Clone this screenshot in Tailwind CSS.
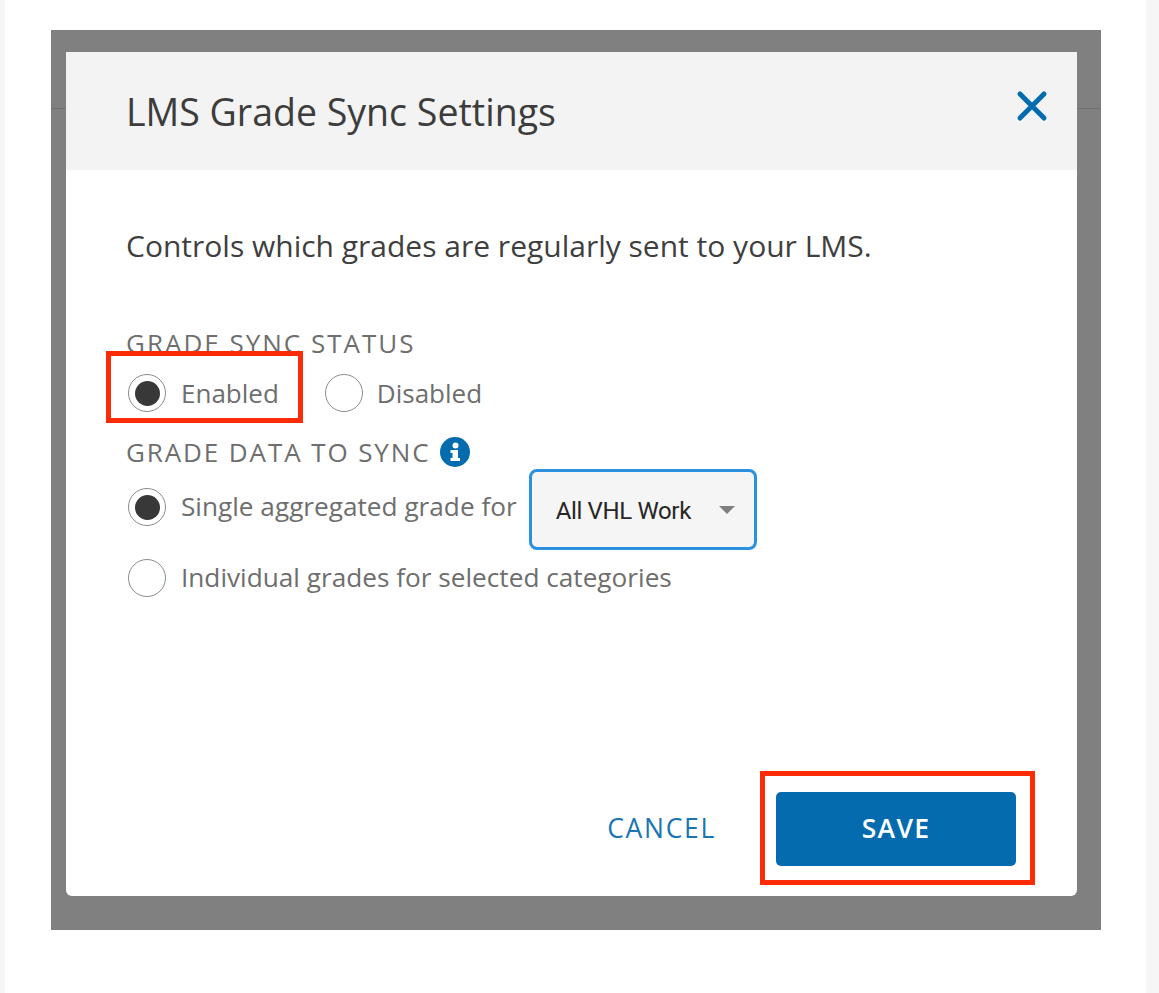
<!DOCTYPE html>
<html lang="en">
<head>
  <meta charset="UTF-8">
  <title>LMS Grade Sync Settings</title>
  <script src="https://cdn.jsdelivr.net/npm/@tailwindcss/browser@4"></script>
</head>
<body class="bg-white font-['Open_Sans',sans-serif] overflow-hidden">
  <div class="flex h-[993px] w-[1159px]">
    <div class="w-[5px] bg-[#f6f6f6]"></div>
    <div class="w-[1141px] pl-[46px] pt-[30px]">
      <!-- gray backdrop -->
      <div class="relative w-[1050px] h-[900px] bg-[#808080] pl-[15px] pt-[22px]">
        <div class="absolute left-0 right-0 top-[78px] h-px bg-[#6f6f6f]"></div>

        <!-- modal -->
        <div class="relative flex flex-col w-[1011px] h-[844px] bg-white rounded-br-[6px] rounded-bl-[6px]">
          <div class="flex items-center justify-between h-[118px] bg-[#f3f3f3] pl-[60px] pr-[29px]">
            <h1 class="text-[37.5px] leading-[46px] text-[#3c3c3c] pt-px">LMS Grade Sync Settings</h1>
            <svg class="w-[32px] h-[32px] mb-[10px]" viewBox="0 0 32 32" fill="none" stroke="#046cae" stroke-width="5" stroke-linecap="round">
              <path d="M4 4L28 28M28 4L4 28"/>
            </svg>
          </div>

          <div class="flex-1 pl-[60px] pt-[56px]">
            <p class="text-[30px] leading-[40px] text-[#3f3f3f]">Controls which grades are regularly sent to your LMS.</p>

            <div class="mt-[60px] text-[26px] leading-[34px] tracking-[2px] text-[#6e6e6e]">GRADE SYNC STATUS</div>
            <div class="flex items-center mt-[13px] h-[40px] ml-[2px] text-[26px] text-[#6e6e6e]">
              <span class="flex items-center justify-center w-[38px] h-[38px] rounded-full border-[1.5px] border-[#8c8c8c] bg-white">
                <span class="w-[25px] h-[25px] rounded-full bg-[#383838]"></span>
              </span>
              <span class="ml-[15px]">Enabled</span>
              <span class="ml-[46px] w-[38px] h-[38px] rounded-full border-[1.5px] border-[#8c8c8c] bg-white"></span>
              <span class="ml-[14px]">Disabled</span>
            </div>

            <div class="flex items-center mt-[22px] h-[34px] text-[26px] tracking-[1.9px] text-[#6e6e6e]">
              <span>GRADE DATA TO SYNC</span>
              <svg class="ml-[9px] w-[30px] h-[30px]" viewBox="0 0 30 30">
                <circle cx="15" cy="15" r="15" fill="#046cae"/>
                <circle cx="15.5" cy="8.5" r="3" fill="#fff"/>
                <path d="M10.5 13H18V21H20V24H10.5V21H12.5V16H10.5Z" fill="#fff"/>
              </svg>
            </div>

            <div class="flex items-start ml-[2px] text-[26.2px] text-[#6e6e6e]">
              <span class="flex items-center justify-center mt-[19px] w-[38px] h-[38px] rounded-full border-[1.5px] border-[#8c8c8c] bg-white">
                <span class="w-[25px] h-[25px] rounded-full bg-[#383838]"></span>
              </span>
              <span class="ml-[15px] mt-[18px] leading-[38px]">Single aggregated grade for</span>
              <div class="flex items-center justify-between ml-[12px] w-[228px] h-[81px] border-[3px] border-[#2a90df] rounded-[8px] bg-[#f5f5f5] pl-[24px] pr-[19px]">
                <span class="font-['Roboto',sans-serif] text-[24px] tracking-[-0.35px] text-[#262626] pt-[3px]">All VHL Work</span>
                <span class="w-0 h-0 border-l-[8px] border-r-[8px] border-t-[8px] border-l-transparent border-r-transparent border-t-[#808080]"></span>
              </div>
            </div>

            <div class="flex items-center mt-[8px] ml-[2px] text-[26.2px] text-[#6e6e6e]">
              <span class="w-[38px] h-[38px] rounded-full border-[1.5px] border-[#8c8c8c] bg-white"></span>
              <span class="ml-[15px]">Individual grades for selected categories</span>
            </div>
          </div>

          <div class="flex items-center justify-end h-[134px] pr-[61px]">
            <span class="text-[26.5px] tracking-[1.7px] text-[#1a75b2] mr-[60px]">CANCEL</span>
            <span class="flex items-center justify-center w-[240px] h-[74px] rounded-[5px] bg-[#046cae] text-[26.5px] font-semibold tracking-[1.3px] text-white">SAVE</span>
          </div>

          <!-- red annotation boxes -->
          <div class="absolute left-[40px] top-[299px] w-[197px] h-[72px] border-[5px] border-[#fb2b06]"></div>
          <div class="absolute left-[694px] top-[719px] w-[275px] h-[114px] border-[5px] border-[#fb2b06]"></div>
        </div>
      </div>
    </div>
    <div class="w-[13px] bg-[#f6f6f6]"></div>
  </div>
</body>
</html>
